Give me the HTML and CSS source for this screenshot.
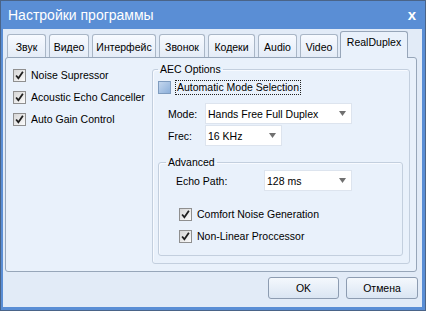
FILE: index.html
```html
<!DOCTYPE html>
<html lang="ru">
<head>
  <meta charset="UTF-8" />
  <title>Настройки программы</title>
  <link rel="stylesheet" href="styles.css">
</head>
<body>

  <div class="window">
    <div class="titlebar">
      <span class="title">Настройки программы</span>
      <span class="close">x</span>
    </div>

    <div class="client">
      <!-- Tabs -->
      <div class="tabs">
        <div class="tab tab-sound">Звук</div>
        <div class="tab tab-video-ru">Видео</div>
        <div class="tab tab-ui">Интерфейс</div>
        <div class="tab tab-call">Звонок</div>
        <div class="tab tab-codecs">Кодеки</div>
        <div class="tab tab-audio">Audio</div>
        <div class="tab tab-video">Video</div>
        <div class="tab tab-duplex active">RealDuplex</div>
      </div>

      <!-- RealDuplex page -->
      <div class="panel">
        <div class="general">
          <div class="check-row">
            <span class="box checked"><svg viewBox="0 0 13 13"><path d="M2.5 6.5 L5.2 9.8 L10.5 2.2" /></svg></span>
            Noise Supressor
          </div>
          <div class="check-row">
            <span class="box checked"><svg viewBox="0 0 13 13"><path d="M2.5 6.5 L5.2 9.8 L10.5 2.2" /></svg></span>
            Acoustic Echo Canceller
          </div>
          <div class="check-row">
            <span class="box checked"><svg viewBox="0 0 13 13"><path d="M2.5 6.5 L5.2 9.8 L10.5 2.2" /></svg></span>
            Auto Gain Control
          </div>
        </div>

        <fieldset class="group aec">
          <legend>AEC Options</legend>

          <div class="check-row auto">
            <span class="box unchecked"></span>
            <span class="focus">Automatic Mode Selection</span>
          </div>

          <div class="field mode">
            <span class="field-label">Mode:</span>
            <div class="combo combo-mode">
              <span>Hands Free Full Duplex</span>
              <svg class="arrow" viewBox="0 0 7 5"><path d="M0 0 H7 L3.5 5 Z" /></svg>
            </div>
          </div>

          <div class="field frec">
            <span class="field-label">Frec:</span>
            <div class="combo combo-frec">
              <span>16 KHz</span>
              <svg class="arrow" viewBox="0 0 7 5"><path d="M0 0 H7 L3.5 5 Z" /></svg>
            </div>
          </div>

          <fieldset class="group advanced">
            <legend>Advanced</legend>

            <div class="field echo">
              <span class="field-label">Echo Path:</span>
              <div class="combo combo-echo">
                <span>128 ms</span>
                <svg class="arrow" viewBox="0 0 7 5"><path d="M0 0 H7 L3.5 5 Z" /></svg>
              </div>
            </div>

            <div class="check-row adv-check first">
              <span class="box checked"><svg viewBox="0 0 13 13"><path d="M2.5 6.5 L5.2 9.8 L10.5 2.2" /></svg></span>
              Comfort Noise Generation
            </div>
            <div class="check-row adv-check">
              <span class="box checked"><svg viewBox="0 0 13 13"><path d="M2.5 6.5 L5.2 9.8 L10.5 2.2" /></svg></span>
              Non-Linear Proccessor
            </div>
          </fieldset>
        </fieldset>
      </div>

      <!-- Dialog buttons -->
      <div class="buttons">
        <button class="btn btn-ok">OK</button>
        <button class="btn btn-cancel">Отмена</button>
      </div>
    </div>
  </div>

</body>
</html>
```

FILE: styles.css
```css
/* Basic Reset & Font */
* {
  box-sizing: border-box;
  margin: 0;
  padding: 0;
}

body {
  font-family: 'Liberation Sans', Arial, sans-serif;
  font-size: 10.5px;
  color: #000;
  background: #fff;
}

/* Window frame */
.window {
  width: 426px;
  height: 311px;
  display: flex;
  flex-direction: column;
  background: #5a8ed5;
  border: 1px solid #4a6488;
  padding: 0 3px 3px 2px;
}

.titlebar {
  height: 28px;
  display: flex;
  align-items: center;
  justify-content: space-between;
  padding: 0 6px 0 5px;
  color: #fff;
}

.titlebar .title {
  font-size: 14px;
}

.titlebar .close {
  font-size: 15px;
  font-weight: bold;
  line-height: 1;
  margin-top: -2px;
}

/* Client area */
.client {
  flex: 1;
  display: flex;
  flex-direction: column;
  background: #e2ebf7;
}

/* Tabs */
.tabs {
  height: 28px;
  display: flex;
  align-items: flex-end;
  gap: 3px;
  padding-left: 4px;
  position: relative;
  z-index: 1;
}

.tab {
  height: 23px;
  padding-top: 6px;
  line-height: 13px;
  text-align: center;
  border: 1px solid #a9b6c6;
  border-bottom: none;
  border-radius: 3px 3px 0 0;
  background: linear-gradient(#f7faff, #e4ecf7);
  white-space: nowrap;
}

.tab-sound { width: 39px; }
.tab-video-ru { width: 40px; }
.tab-ui { width: 64px; }
.tab-call { width: 46px; }
.tab-codecs { width: 47px; }
.tab-audio { width: 39px; }
.tab-video { width: 38px; }
.tab-duplex { width: 68px; }

.tab.active {
  height: 27px;
  margin-bottom: -1px;
  padding-top: 4px;
  margin-left: -1px;
  background: #e9f1fb;
  border-color: #97a6b9;
}

/* Page panel */
.panel {
  flex: 1;
  display: flex;
  align-items: flex-start;
  padding: 5px 6px 0 7px;
  margin: 0 5px 0 2px;
  background: #e9f1fb;
  border: 1px solid #97a6b9;
  border-radius: 3px;
}

.general {
  width: 139px;
  padding-top: 1px;
}

/* Checkboxes */
.check-row {
  height: 22px;
  display: flex;
  align-items: center;
  gap: 5px;
  white-space: nowrap;
}

.box {
  width: 13px;
  height: 13px;
  flex: none;
  border: 1px solid #8f8f8f;
  background: linear-gradient(135deg, #d6d6d6, #fbfbfb);
}

.box svg {
  display: block;
  width: 11px;
  height: 11px;
}

.box svg path {
  fill: none;
  stroke: #1e1e1e;
  stroke-width: 2.1;
}

.box.unchecked {
  border-color: #7f9cbf;
  background: linear-gradient(135deg, #c4d7ee, #8db0da);
}

.check-row.auto {
  height: 15px;
  margin-top: 4px;
  gap: 4px;
}

.focus {
  border: 1px dotted #222;
  padding: 0 1px;
  line-height: 13px;
}

/* Group boxes */
.group {
  min-width: 0;
  border: 1px solid #c3cfde;
  border-radius: 3px;
  box-shadow: inset 1px 1px 0 #f7faff;
}

.group legend {
  padding: 0 2px;
  line-height: 13px;
}

.aec {
  width: 258px;
  padding: 0 6px 7px 5px;
}

.advanced {
  margin-top: 10px;
  padding: 0 6px 8px 7px;
}

/* Label + combo rows */
.field {
  display: flex;
  align-items: center;
}

.field-label {
  margin-left: 10px;
  width: 37px;
}

.field.mode {
  margin-top: 8px;
}

.field.frec {
  margin-top: 1px;
}

.field.echo {
  margin-top: 1px;
}

.field.echo .field-label {
  width: 88px;
}

.combo {
  height: 21px;
  display: flex;
  align-items: center;
  justify-content: space-between;
  padding: 0 5px 0 2px;
  background: #fff;
  border: 1px solid #dde4ee;
}

.combo .arrow {
  width: 7px;
  height: 5px;
  fill: #707070;
}

.combo-mode {
  width: 147px;
}

.combo-frec {
  width: 77px;
}

.combo-echo {
  width: 88px;
}

.adv-check {
  margin-left: 13px;
}

.adv-check.first {
  margin-top: 12px;
}

/* Dialog buttons */
.buttons {
  display: flex;
  justify-content: flex-end;
  gap: 7px;
  margin: 5px 4px 8px 0;
}

.btn {
  height: 22px;
  font-family: inherit;
  font-size: 10.5px;
  color: #000;
  border: 1px solid #8d9cb1;
  border-radius: 3px;
  background: linear-gradient(#f4f8fd, #dae5f3);
}

.btn-ok {
  width: 71px;
}

.btn-cancel {
  width: 72px;
}
```
